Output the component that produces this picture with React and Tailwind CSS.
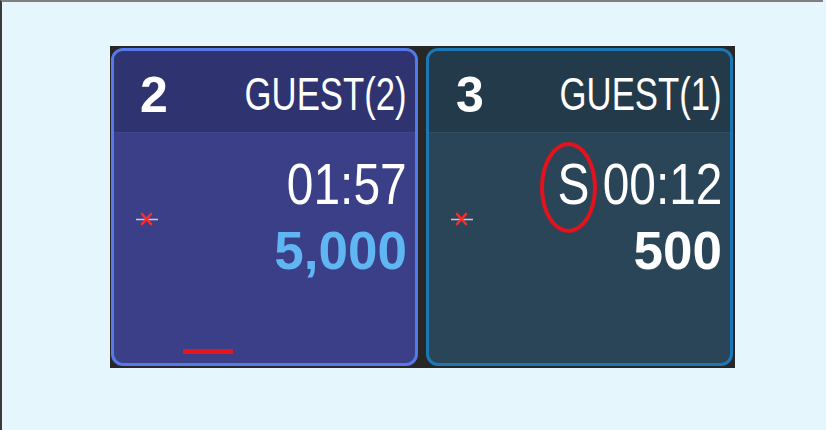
import React from "react";

function Marker() {
  return (
    <svg className="absolute left-[22px] top-[161px]" width="22" height="14" viewBox="0 0 22 14">
      <line x1="0" y1="7.5" x2="22" y2="7.5" stroke="#c9c9d6" strokeWidth="1.6" />
      <line x1="6" y1="2" x2="15" y2="12" stroke="#ff2a2a" strokeWidth="2.6" strokeLinecap="round" />
      <line x1="15" y1="2" x2="6" y2="12" stroke="#ff2a2a" strokeWidth="2.6" strokeLinecap="round" />
    </svg>
  );
}

export default function App() {
  const font = { fontFamily: '"Liberation Sans", Arial, sans-serif' };
  return (
    <div className="w-[826px] h-[430px] bg-[#e5f6fc]" style={font}>
      <div className="w-[823px] h-[430px] border-t-2 border-t-[#7f7f7f] border-l-2 border-l-[#3a3a3a] pl-[108px] pt-[44px]">
        <div className="w-[625px] h-[322px] bg-[#272727] flex gap-[8px] pl-[1px] pt-[2px] text-white">
          {/* Card 1 */}
          <div className="relative w-[307px] h-[318px] rounded-[12px] border-[3px] border-[#5679ea] bg-[#3b3f87] overflow-hidden flex flex-col">
            <div className="h-[82px] bg-[#2f336f] flex justify-between border-b border-b-[#3f4590]">
              <div className="ml-[26px] mt-[19px] text-[50px] font-bold leading-none">2</div>
              <div className="mr-[8px] mt-[20px] text-[46px] leading-none scale-x-[0.755] origin-right whitespace-nowrap">GUEST(2)</div>
            </div>
            <div className="flex-1 flex flex-col items-end pr-[8px]">
              <div className="mt-[23px] text-[57px] leading-none scale-x-[0.84] origin-right whitespace-nowrap">01:57</div>
              <div className="mt-[11px] text-[53px] font-bold leading-none text-[#5fb6f2]">5,000</div>
              <div className="mt-auto mb-[9px] self-start ml-[69px] w-[50px] h-[5px] bg-[#e8141e]"></div>
            </div>
            <Marker />
          </div>
          {/* Card 2 */}
          <div className="relative w-[307px] h-[318px] rounded-[12px] border-[3px] border-[#1b77b6] bg-[#2b4558] overflow-hidden flex flex-col">
            <div className="h-[82px] bg-[#233a4b] flex justify-between border-b border-b-[#2f4c60]">
              <div className="ml-[27px] mt-[19px] text-[50px] font-bold leading-none">3</div>
              <div className="mr-[8px] mt-[20px] text-[46px] leading-none scale-x-[0.755] origin-right whitespace-nowrap">GUEST(1)</div>
            </div>
            <div className="flex-1 flex flex-col items-end pr-[8px]">
              <div className="mt-[23px] text-[57px] leading-none scale-x-[0.84] origin-right whitespace-nowrap">S 00:12</div>
              <div className="mt-[11px] text-[53px] font-bold leading-none">500</div>
            </div>
            <Marker />
            <div className="absolute left-[111px] top-[91px] w-[57px] h-[91px] rounded-[50%] border-4 border-[#e3121c]"></div>
          </div>
        </div>
      </div>
    </div>
  );
}
